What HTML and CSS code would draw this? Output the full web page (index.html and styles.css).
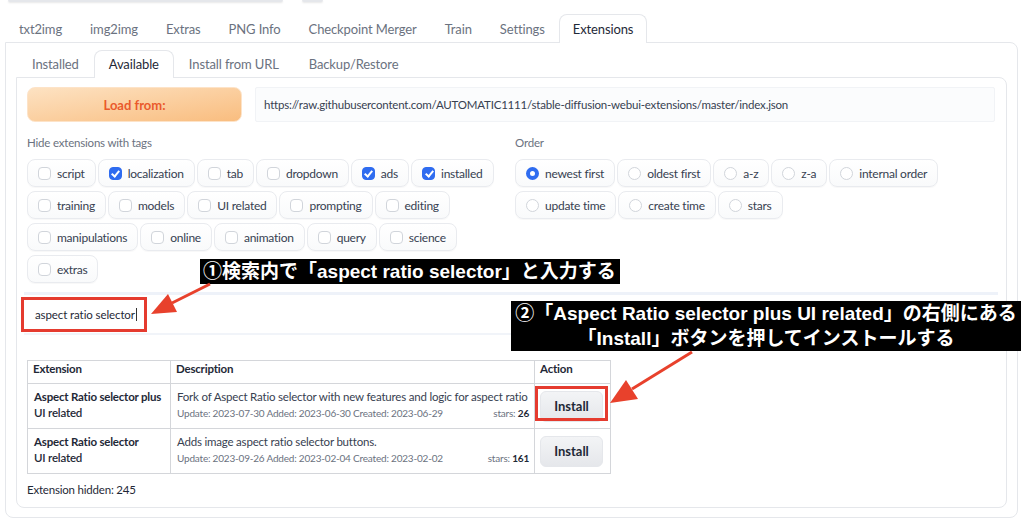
FILE: index.html
```html
<!DOCTYPE html>
<html lang="en">
<head>
  <meta charset="UTF-8" />
  <meta name="viewport" content="width=device-width, initial-scale=1" />
  <title>Extensions</title>
  <link rel="stylesheet" href="styles.css">
</head>
<body>
  <div class="page">
    <div class="top-strip"><span class="strip-a"></span><span class="strip-b"></span></div>

    <div class="tabbar">
      <div class="tab">txt2img</div>
      <div class="tab">img2img</div>
      <div class="tab">Extras</div>
      <div class="tab">PNG Info</div>
      <div class="tab">Checkpoint Merger</div>
      <div class="tab">Train</div>
      <div class="tab">Settings</div>
      <div class="tab active">Extensions</div>
    </div>

    <div class="panel">
      <div class="tabbar sub">
        <div class="tab">Installed</div>
        <div class="tab active">Available</div>
        <div class="tab">Install from URL</div>
        <div class="tab">Backup/Restore</div>
      </div>

      <div class="subpanel">
        <div class="load-row">
          <div class="btn-primary">Load from:</div>
          <div class="url">https://raw.githubusercontent.com/AUTOMATIC1111/stable-diffusion-webui-extensions/master/index.json</div>
        </div>

        <div class="filters">
          <div class="group">
            <div class="label">Hide extensions with tags</div>
            <div class="chips">
              <label class="chip"><span class="box"></span>script</label>
              <label class="chip"><span class="box on"></span>localization</label>
              <label class="chip"><span class="box"></span>tab</label>
              <label class="chip"><span class="box"></span>dropdown</label>
              <label class="chip"><span class="box on"></span>ads</label>
              <label class="chip"><span class="box on"></span>installed</label>
              <label class="chip"><span class="box"></span>training</label>
              <label class="chip"><span class="box"></span>models</label>
              <label class="chip"><span class="box"></span>UI related</label>
              <label class="chip"><span class="box"></span>prompting</label>
              <label class="chip"><span class="box"></span>editing</label>
              <label class="chip"><span class="box"></span>manipulations</label>
              <label class="chip"><span class="box"></span>online</label>
              <label class="chip"><span class="box"></span>animation</label>
              <label class="chip"><span class="box"></span>query</label>
              <label class="chip"><span class="box"></span>science</label>
              <label class="chip"><span class="box"></span>extras</label>
            </div>
          </div>
          <div class="group">
            <div class="label">Order</div>
            <div class="chips">
              <label class="chip"><span class="radio on"></span>newest first</label>
              <label class="chip"><span class="radio"></span>oldest first</label>
              <label class="chip"><span class="radio"></span>a-z</label>
              <label class="chip"><span class="radio"></span>z-a</label>
              <label class="chip"><span class="radio"></span>internal order</label>
              <label class="chip"><span class="radio"></span>update time</label>
              <label class="chip"><span class="radio"></span>create time</label>
              <label class="chip"><span class="radio"></span>stars</label>
            </div>
          </div>
        </div>

        <div class="search"><span class="caret">aspect ratio selector</span></div>

        <table class="ext-table">
          <colgroup><col class="c-name"><col class="c-desc"><col class="c-act"></colgroup>
          <thead>
            <tr><th>Extension</th><th>Description</th><th>Action</th></tr>
          </thead>
          <tbody>
            <tr>
              <td class="name"><b>Aspect Ratio selector plus</b><br><span class="tag">UI related</span></td>
              <td class="desc">
                <div class="desc-text">Fork of Aspect Ratio selector with new features and logic for aspect ratio</div>
                <div class="meta"><span>Update: 2023-07-30 Added: 2023-06-30 Created: 2023-06-29</span><span>stars: <b>26</b></span></div>
              </td>
              <td class="act"><div class="btn-install">Install</div></td>
            </tr>
            <tr>
              <td class="name"><b>Aspect Ratio selector</b><br><span class="tag">UI related</span></td>
              <td class="desc">
                <div class="desc-text">Adds image aspect ratio selector buttons.</div>
                <div class="meta"><span>Update: 2023-09-26 Added: 2023-02-04 Created: 2023-02-02</span><span>stars: <b>161</b></span></div>
              </td>
              <td class="act"><div class="btn-install">Install</div></td>
            </tr>
          </tbody>
        </table>

        <div class="hidden-count">Extension hidden: 245</div>
      </div>
    </div>

    <!-- annotations drawn over the screenshot -->
    <div class="mark mark-search"></div>
    <div class="mark mark-install"></div>
    <div class="note note-1">①検索内で「aspect ratio selector」と入力する</div>
    <div class="note note-2">②「Aspect Ratio selector plus UI related」の右側にある<br>「Install」ボタンを押してインストールする</div>
    <svg class="arrows" width="1024" height="525" viewBox="0 0 1024 525">
      <line x1="210" y1="284" x2="172" y2="303" stroke="#e8412c" stroke-width="3" />
      <polygon points="151,314 177,312 168,294" fill="#e8412c" />
      <line x1="692" y1="352" x2="632" y2="389" stroke="#e8412c" stroke-width="3" />
      <polygon points="610,403 638,399 626,380" fill="#e8412c" />
    </svg>
  </div>
</body>
</html>
```

FILE: styles.css
```css
* {
  box-sizing: border-box;
}
body {
  margin: 0;
  font-family: Lato, "Noto Sans", sans-serif;
  color: #1f2937;
  background: #fff;
}
.page {
  position: relative;
  width: 1024px;
  height: 525px;
  overflow: hidden;
  padding: 0 6px 0 5px;
}
.top-strip {
  display: flex;
  gap: 19px;
  padding-left: 3px;
  height: 2px;
}
.top-strip span {
  height: 2px;
  background: #e5e7eb;
  border-radius: 0 0 4px 4px;
  box-shadow: 0 1px 2px rgba(0,0,0,0.1);
}
.strip-a {
  width: 275px;
}
.strip-b {
  width: 21px;
}

/* tabs */
.tabbar {
  display: flex;
  margin-top: 12px;
  height: 28px;
}
.tabbar.sub {
  margin-top: 0;
  height: 27px;
  padding-left: 1px;
}
.tab {
  padding: 1px 13px 0 13px;
  font-size: 13px;
  letter-spacing: -0.12px;
  line-height: 26px;
  color: #6b7280;
  border: 1px solid transparent;
  border-bottom: 0;
  border-radius: 8px 8px 0 0;
}
.tabbar.sub .tab {
  padding: 0 14px;
}
.tab.active {
  position: relative;
  z-index: 1;
  color: #1f2937;
  background: #fff;
  border-color: #e5e7eb;
  height: calc(100% + 1px);
}
.panel {
  border: 1px solid #e5e7eb;
  border-radius: 0 8px 8px 8px;
  padding: 7px 10px 9px 10px;
}
.subpanel {
  border: 1px solid #e5e7eb;
  border-radius: 0 8px 8px 8px;
  padding: 9px 11px 9px 10px;
}

/* load row */
.load-row {
  display: flex;
  gap: 13px;
  height: 35px;
}
.btn-primary {
  width: 215px;
  display: flex;
  align-items: center;
  justify-content: center;
  font-size: 13px;
  font-weight: 700;
  color: #ea5a2c;
  background: linear-gradient(to bottom right, #fde2c2, #f9bd7f);
  border: 1px solid #fde3c8;
  border-radius: 8px;
}
.url {
  flex: 1;
  display: flex;
  align-items: center;
  padding-left: 8px;
  font-size: 11.5px;
  letter-spacing: -0.2px;
  color: #374151;
  background: #fbfcfd;
  border: 1px solid #f1f3f6;
  border-radius: 2px;
}

/* filters */
.filters {
  display: grid;
  grid-template-columns: 1fr 1fr;
  gap: 8px;
  margin-top: 13px;
}
.label {
  font-size: 11.5px;
  letter-spacing: -0.2px;
  line-height: 16px;
  color: #6b7280;
  margin-bottom: 8px;
}
.chips {
  display: flex;
  flex-wrap: wrap;
  gap: 4px 2px;
}
.chip {
  display: flex;
  align-items: center;
  gap: 6px;
  height: 28px;
  padding: 0 10px 0 10px;
  font-size: 12px;
  letter-spacing: -0.25px;
  color: #374151;
  background: linear-gradient(#fff, #f9fafb);
  border: 1px solid #e9ebef;
  border-radius: 8px;
  box-shadow: 0 1px 1px rgba(0,0,0,0.03);
}
.box,
.radio {
  position: relative;
  width: 13px;
  height: 13px;
  border: 1px solid #d1d5db;
  background: #fff;
  flex-shrink: 0;
}
.box {
  border-radius: 4px;
}
.box.on {
  background: #2f6cf0;
  border-color: #2f6cf0;
}
.box.on::after {
  content: "";
  position: absolute;
  left: 3.5px;
  top: 1px;
  width: 3px;
  height: 6px;
  border: solid #fff;
  border-width: 0 2px 2px 0;
  transform: rotate(40deg);
}
.radio {
  border-radius: 50%;
}
.radio.on {
  border: 4px solid #2f6cf0;
}

/* search */
.search {
  margin: 9px -3px 0 -3px;
  height: 43px;
  display: flex;
  align-items: center;
  padding-left: 11px;
  font-size: 11.5px;
  letter-spacing: -0.1px;
  color: #1f2937;
  border-top: 3px solid #eef2f9;
  border-bottom: 2px solid #f1f4f9;
}
.caret {
  border-right: 1px solid #333;
  padding-right: 1px;
}

/* table */
.ext-table {
  margin-top: 25px;
  border-collapse: collapse;
  table-layout: fixed;
  font-size: 11.5px;
  letter-spacing: -0.2px;
  width: 583px;
}
.c-name {
  width: 143px;
}
.c-desc {
  width: 364px;
}
.c-act {
  width: 76px;
}
.ext-table th,
.ext-table td {
  border: 1px solid #d4d6da;
  text-align: left;
  vertical-align: top;
}
.ext-table th {
  height: 23px;
  padding: 1px 5px 0 5px;
  font-weight: 700;
}
.ext-table td {
  height: 45px;
  padding: 5px 5px 0 6px;
  line-height: 16px;
}
.name {
  white-space: nowrap;
}
.tag {
  font-weight: 600;
}
.desc-text {
  white-space: nowrap;
  color: #374151;
}
.meta {
  display: flex;
  justify-content: space-between;
  font-size: 10px;
  color: #6b7280;
  white-space: nowrap;
}
.meta b {
  color: #1f2937;
}
.ext-table td.act {
  vertical-align: middle;
  padding: 0 5px;
}
.btn-install {
  width: 63px;
  height: 31px;
  display: flex;
  align-items: center;
  justify-content: center;
  font-size: 13px;
  letter-spacing: 0;
  font-weight: 700;
  color: #1f2937;
  background: linear-gradient(#f3f4f6, #e5e7eb);
  border: 1px solid #e5e7eb;
  border-radius: 6px;
}
.hidden-count {
  margin-top: 8px;
  font-size: 11.5px;
  letter-spacing: -0.2px;
  line-height: 16px;
}

/* annotations */
.mark {
  position: absolute;
  border: 3px solid #e53b2f;
}
.mark-search {
  left: 21px;
  top: 297px;
  width: 126px;
  height: 35px;
}
.mark-install {
  left: 535px;
  top: 386px;
  width: 73px;
  height: 35px;
}
.note {
  position: absolute;
  background: #000;
  color: #fff;
  font-family: "Liberation Sans", "Noto Sans CJK JP", sans-serif;
  font-weight: 700;
  font-size: 19px;
  line-height: 25px;
  white-space: nowrap;
}
.note-1 {
  left: 200px;
  top: 259px;
  padding: 0 4px 0 3px;
}
.note-2 {
  left: 511px;
  top: 301px;
  width: 510px;
  padding: 0 2px;
  text-align: center;
}
.arrows {
  position: absolute;
  left: 0;
  top: 0;
  pointer-events: none;
}
```
